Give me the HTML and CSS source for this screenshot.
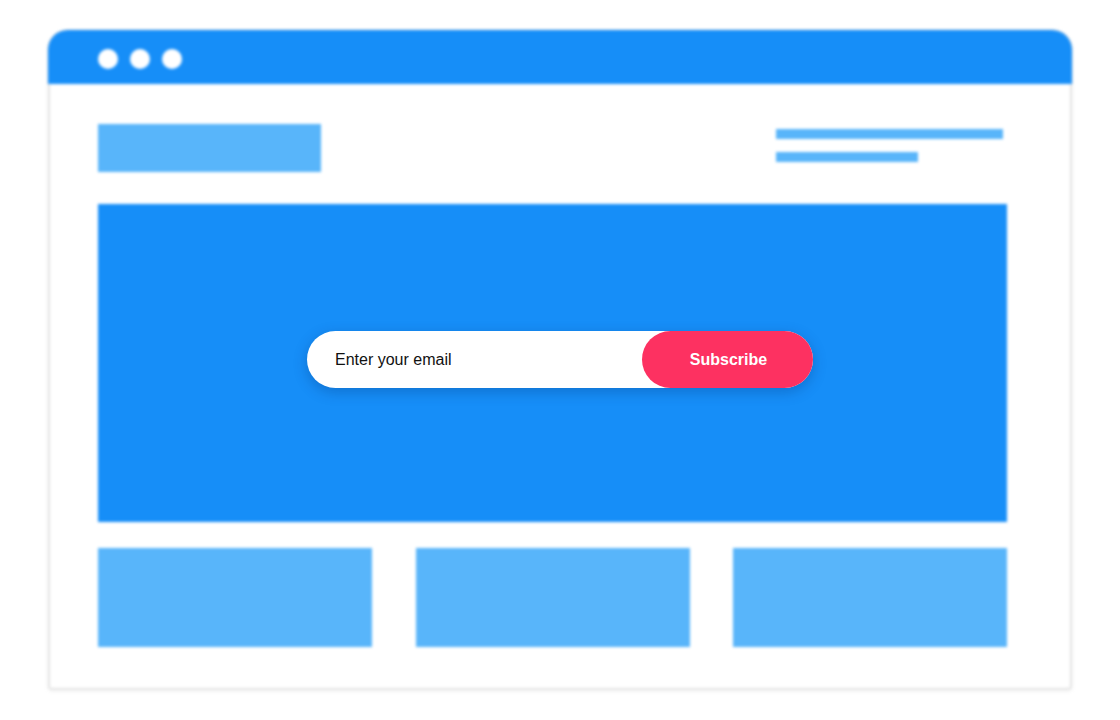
FILE: index.html
```html
<!DOCTYPE html>
<html lang="en">
<head>
<meta charset="utf-8">
<title>Subscribe</title>
<link rel="stylesheet" href="styles.css">
</head>
<body>
<div class="page">
  <div class="window">
    <div class="titlebar">
      <span class="dot"></span><span class="dot"></span><span class="dot"></span>
    </div>
    <div class="content">
      <div class="header">
        <div class="logo"></div>
        <div class="nav">
          <div class="line line-long"></div>
          <div class="line line-short"></div>
        </div>
      </div>
      <div class="hero">
        <form class="subscribe">
          <input class="email" type="email" placeholder="Enter your email">
          <button class="btn" type="button">Subscribe</button>
        </form>
      </div>
      <div class="cards">
        <div class="card"></div>
        <div class="card"></div>
        <div class="card"></div>
      </div>
    </div>
  </div>
</div>
</body>
</html>
```
FILE: styles.css
```css
* { box-sizing: border-box; }
html, body { margin: 0; padding: 0; background: #ffffff; }
body { font-family: "Liberation Sans", Arial, sans-serif; }

.page {
  padding: 30px 48px 30px 48px;
}

.window {
  position: relative;
  width: 1024px;
  height: 660px;
  display: flex;
  flex-direction: column;
}
.window::before {
  content: "";
  position: absolute;
  inset: 0;
  border: 2px solid #e3e3e3;
  border-radius: 20px 20px 4px 4px;
  filter: blur(1.5px);
  box-shadow: 0 1px 4px rgba(0,0,0,0.06);
}

.titlebar {
  position: relative;
  height: 54px;
  background: #168ef8;
  border-radius: 20px 20px 0 0;
  display: flex;
  align-items: center;
  gap: 12px;
  padding: 4px 0 0 50px;
  filter: blur(1.6px);
}
.dot {
  width: 20px;
  height: 20px;
  border-radius: 50%;
  background: #ffffff;
}

.content {
  position: relative;
  flex: 1;
  padding: 40px 65px 0 50px;
  display: flex;
  flex-direction: column;
}

.header {
  display: flex;
  justify-content: space-between;
  align-items: flex-start;
  height: 48px;
}
.logo {
  width: 223px;
  height: 48px;
  background: #58b5fa;
  filter: blur(1.5px);
}
.nav {
  display: flex;
  flex-direction: column;
  gap: 13px;
  margin-top: 5px;
  margin-right: 4px;
  width: 227px;
}
.line {
  height: 10px;
  background: #58b5fa;
  filter: blur(1.5px);
}
.line-long { width: 227px; }
.line-short { width: 142px; }

.hero {
  position: relative;
  margin-top: 32px;
  height: 318px;
  display: flex;
  align-items: center;
  justify-content: center;
  padding: 0 0 7px 15px;
}
.hero::before {
  content: "";
  position: absolute;
  inset: 0;
  background: #168ef8;
  filter: blur(1.5px);
}

.subscribe {
  position: relative;
  width: 506px;
  height: 57px;
  margin: 0;
  display: flex;
  background: #ffffff;
  border-radius: 29px;
  box-shadow: 0 4px 14px rgba(0, 40, 100, 0.28);
}
.email {
  flex: 1;
  min-width: 0;
  border: 0;
  outline: none;
  background: transparent;
  padding: 0 0 0 28px;
  font-family: "Liberation Sans", Arial, sans-serif;
  font-size: 16px;
  color: #111111;
  border-radius: 29px 0 0 29px;
}
.email::placeholder { color: #111111; opacity: 1; }
.btn {
  width: 171px;
  height: 57px;
  border: 0;
  border-radius: 29px;
  background: #fd3161;
  color: #ffffff;
  font-family: "Liberation Sans", Arial, sans-serif;
  font-weight: 700;
  font-size: 16px;
  padding: 0 0 0 2px;
  cursor: pointer;
}

.cards {
  margin-top: 26px;
  display: grid;
  grid-template-columns: repeat(3, 274px);
  justify-content: space-between;
}
.card {
  height: 99px;
  background: #58b5fa;
  filter: blur(1.5px);
}
```
